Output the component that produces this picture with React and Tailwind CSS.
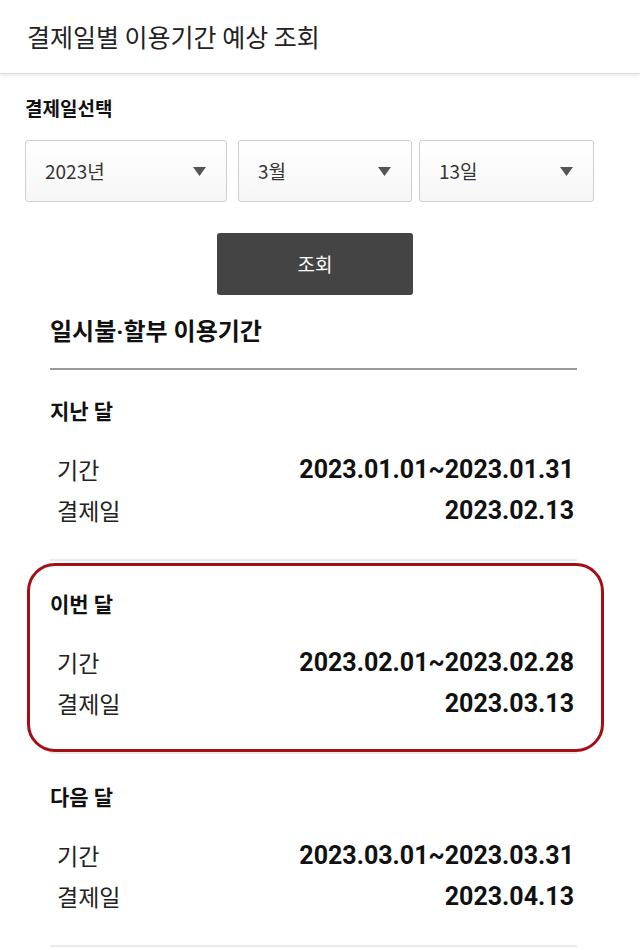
import React from 'react';

const sections = [
  { title: '지난 달', period: '2023.01.01~2023.01.31', payDay: '2023.02.13' },
  { title: '이번 달', period: '2023.02.01~2023.02.28', payDay: '2023.03.13', current: true },
  { title: '다음 달', period: '2023.03.01~2023.03.31', payDay: '2023.04.13' },
];

function Select({ label, width }) {
  return (
    <div
      className={`${width} h-[62px] flex items-center justify-between pl-[19px] pr-[19px] border border-[#cfcfcf] rounded-[3px] bg-gradient-to-b from-white to-[#f6f6f6] text-[19px] text-[#333]`}
    >
      <span>{label}</span>
      <svg width="13" height="9" viewBox="0 0 13 9" className="mr-[1px]">
        <path d="M0 0 H13 L6.5 9 Z" fill="#555" />
      </svg>
    </div>
  );
}

function Period({ section }) {
  return (
    <div className="relative pt-[29px] pb-[28px] border-t-2 border-[#ebebeb]">
      {section.current && (
        <div className="absolute -left-[23px] -right-[27px] top-[2px] bottom-0 border-[3px] border-[#a30f14] rounded-[28px] pointer-events-none" />
      )}
      <h3 className="text-[21px] leading-[30px] font-bold text-[#111] font-['Roboto','Noto_Sans_CJK_KR',sans-serif]">
        {section.title}
      </h3>
      <div className="mt-[22px] pl-[7px] text-[23px] text-[#222]">
        <div className="flex justify-between items-center h-[41px]">
          <span>기간</span>
          <span className="font-bold text-[25px] text-[#111] pr-[3px] font-['Roboto','Noto_Sans_CJK_KR',sans-serif]">
            {section.period}
          </span>
        </div>
        <div className="flex justify-between items-center h-[41px]">
          <span>결제일</span>
          <span className="font-bold text-[25px] text-[#111] pr-[3px] font-['Roboto','Noto_Sans_CJK_KR',sans-serif]">
            {section.payDay}
          </span>
        </div>
      </div>
    </div>
  );
}

export default function App() {
  return (
    <div className="w-[640px] min-h-[950px] bg-white font-['Noto_Sans_CJK_KR',sans-serif] text-[#222] overflow-hidden">
      <header className="h-[74px] flex items-center pl-[27px] border-b border-[#dcdcdc] shadow-[0_2px_3px_rgba(0,0,0,0.08)]">
        <h1 className="text-[25px] text-[#222]">결제일별 이용기간 예상 조회</h1>
      </header>

      <div className="px-[25px] pt-[20px]">
        <h2 className="text-[19px] font-bold text-[#111] leading-[28px]">결제일선택</h2>
        <div className="flex mt-[18px]">
          <Select label="2023년" width="w-[202px]" />
          <div className="ml-[11px]">
            <Select label="3월" width="w-[174px]" />
          </div>
          <div className="ml-[7px]">
            <Select label="13일" width="w-[175px]" />
          </div>
        </div>
        <div className="flex justify-center mt-[31px] pr-[10px]">
          <button className="w-[196px] h-[62px] bg-[#444] rounded-[3px] text-white text-[19px]">조회</button>
        </div>
      </div>

      <div className="px-[50px] pr-[63px] mt-[20px]">
        <h2 className="text-[24px] font-bold text-[#111] leading-[34px] pb-[19px] border-b-2 border-[#9a9a9a] font-['Roboto','Noto_Sans_CJK_KR',sans-serif]">
          일시불·할부 이용기간
        </h2>
        <div className="-mt-[2px]">
          {sections.map((s, i) => (
            <div key={s.title} className={i === 0 ? '[&>div]:border-t-0' : ''}>
              <Period section={s} />
            </div>
          ))}
          <div className="border-t-2 border-[#ebebeb]" />
        </div>
      </div>
    </div>
  );
}
